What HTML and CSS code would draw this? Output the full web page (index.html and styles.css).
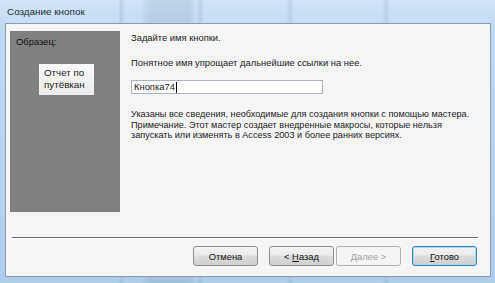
FILE: index.html
```html
<!DOCTYPE html>
<html lang="ru">
<head>
<meta charset="utf-8">
<link rel="stylesheet" href="styles.css">
</head>
<body>
<div class="window">
  <div class="titlebar"><span class="title">Создание кнопок</span></div>
  <div class="client">
    <div class="main">
      <div class="sample">
        <div class="sample-label">Образец:</div>
        <div class="sample-btn">
          <div class="sample-line">Отчет по</div>
          <div class="sample-line">путёвкан</div>
        </div>
      </div>
      <div class="content">
        <p class="line">Задайте имя кнопки.</p>
        <p class="line hint">Понятное имя упрощает дальнейшие ссылки на нее.</p>
        <div class="input"><span>Кнопка74</span><span class="caret"></span></div>
        <p class="note">Указаны все сведения, необходимые для создания кнопки с помощью мастера.<br>Примечание. Этот мастер создает внедренные макросы, которые нельзя<br>запускать или изменять в Access 2003 и более ранних версиях.</p>
      </div>
    </div>
    <div class="sep"></div>
    <div class="buttons">
      <div class="btn"><span>Отмена</span></div>
      <div class="btn back"><span>&lt; <u>Н</u>азад</span></div>
      <div class="btn disabled"><span>Далее &gt;</span></div>
      <div class="btn default"><span><u>Г</u>отово</span></div>
    </div>
  </div>
</div>
</body>
</html>
```
FILE: styles.css
```css
html, body {
  margin: 0;
  padding: 0;
}
body {
  width: 495px;
  height: 283px;
  overflow: hidden;
  font-family: "Liberation Sans", Arial, sans-serif;
  font-size: 9.4px;
  color: #1a1a1a;
}
.window {
  width: 495px;
  height: 283px;
  box-sizing: border-box;
  padding: 0 4px 6px 5px;
  display: flex;
  flex-direction: column;
  background:
    linear-gradient(90deg, transparent 118px, rgba(120,140,170,0.22) 121px, transparent 125px,
      transparent 140px, rgba(110,130,160,0.18) 150px, rgba(110,130,160,0.18) 190px, transparent 196px,
      transparent 196px, rgba(120,140,170,0.22) 200px, transparent 204px,
      transparent 286px, rgba(120,140,170,0.18) 290px, transparent 294px,
      transparent 382px, rgba(120,140,170,0.18) 386px, transparent 390px),
    linear-gradient(180deg, #d2e5f7 0%, #c0d8f1 12%, #b6d1ee 60%, #b0cdeb 100%);
}
.titlebar {
  height: 23px;
  display: flex;
  align-items: center;
  padding-left: 2px;
}
.title {
  font-size: 9.9px;
  color: #1e2a36;
}
.client {
  flex: 1;
  background: #f5f5f5;
  border: 1px solid #8c9db2;
  display: flex;
  flex-direction: column;
}
.main {
  display: flex;
  gap: 11px;
  padding: 7px 0 0 4px;
  height: 181px;
}
.sample {
  flex: 0 0 110px;
  width: 110px;
  height: 181px;
  background: #808080;
  box-sizing: border-box;
  padding: 5px 0 0 6px;
}
.sample-label {
  line-height: 12px;
  color: #111;
}
.sample-btn {
  margin: 16px 0 0 23px;
  width: 55px;
  height: 31px;
  box-sizing: border-box;
  padding: 3px 0 0 5px;
  background: linear-gradient(180deg, #fafafa, #ececec);
  color: #222;
  font-size: 9.8px;
}
.sample-line {
  line-height: 12px;
}
.content {
  flex: 1;
  min-width: 0;
  padding-top: 1px;
}
.line {
  margin: 0;
  line-height: 12px;
}
.hint {
  margin-top: 13px;
}
.input {
  margin-top: 11px;
  width: 192px;
  height: 14px;
  box-sizing: border-box;
  border: 1px solid #a9b3bd;
  background: #fff;
  line-height: 12px;
  padding-left: 2px;
  display: flex;
  align-items: center;
}
.caret {
  display: inline-block;
  width: 1px;
  height: 11px;
  background: #000;
  margin-left: 1px;
}
.note {
  margin: 15px 0 0 0;
  font-size: 9.15px;
  line-height: 10.7px;
  white-space: nowrap;
}
.sep {
  margin: 25px 12px 0 6px;
  height: 1px;
  background: #6c6c6c;
  border-bottom: 1px solid #fff;
}
.buttons {
  display: flex;
  padding-left: 187px;
  margin-top: 7px;
}
.btn {
  width: 65px;
  height: 20px;
  box-sizing: border-box;
  border: 1px solid #8e8f8f;
  border-radius: 3px;
  background: linear-gradient(180deg, #f3f3f3 0%, #ebebeb 45%, #dddddd 50%, #cfcfcf 100%);
  display: flex;
  align-items: center;
  justify-content: center;
  color: #111;
}
.back {
  margin-left: 11px;
}
.disabled {
  margin-left: 2px;
  background: #f4f4f4;
  border-color: #adb2b5;
  color: #a0a0a0;
}
.default {
  margin-left: 11px;
  border-color: #3c7fb1;
  box-shadow: inset 0 0 0 1px #a7d8f5;
}
```
